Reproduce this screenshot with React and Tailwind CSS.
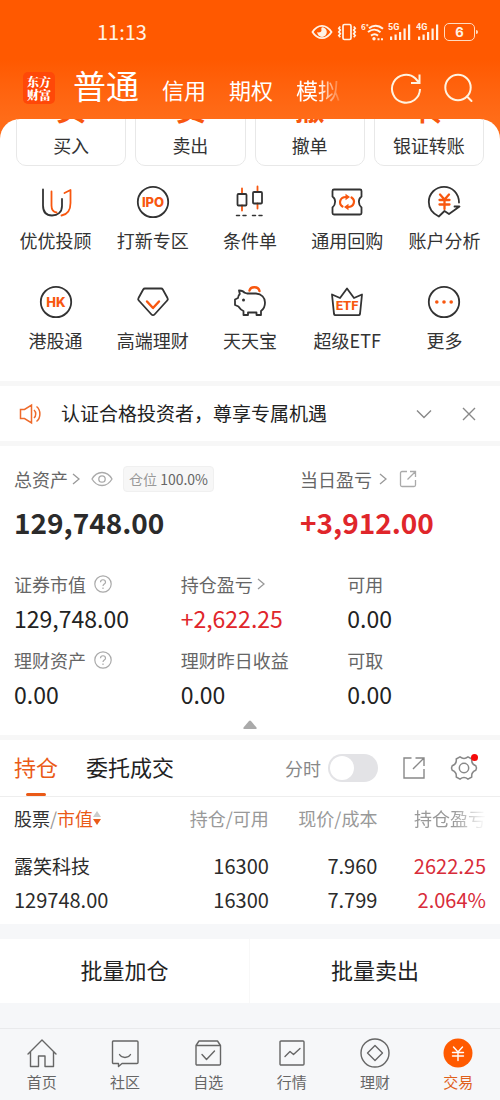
import { useState } from "react";

const accounts = ["信用", "期权"];

const actions = [
  { glyph: "买", label: "买入" },
  { glyph: "卖", label: "卖出" },
  { glyph: "撤", label: "撤单" },
  { glyph: "转", label: "银证转账" },
];

const StatusIcons = () => (
  <div className="flex items-center gap-1 text-[#fff3e6]">
    <svg className="h-5 w-[22px]" viewBox="0 0 22 20" fill="none" stroke="currentColor" strokeWidth="1.8">
      <path d="M1.5 10C4 6 7.300 3.800 11 3.800S18 6 20.500 10C18 14 14.700 16.200 11 16.200S4 14 1.500 10z" />
      <path d="M11 5.300a4.800 4.800 0 1 1-4.800 4.800c1.300.9 4.300.2 4.300-1.600 0-1-.6-2.400.5-3.200z" fill="currentColor" stroke="none" />
    </svg>
    <svg className="h-5 w-5" viewBox="0 0 20 20" fill="none" stroke="currentColor" strokeWidth="1.7">
      <rect x="6" y="2.500" width="8" height="15" rx="1.500" />
      <path d="M3.300 4.500L1.800 6.300l1.500 1.800-1.500 1.800 1.500 1.800-1.500 1.800 1.500 1.800M16.700 4.500l1.500 1.800-1.500 1.800 1.500 1.800-1.500 1.800 1.500 1.800-1.500 1.800" />
    </svg>
    <svg className="h-5 w-[23px]" viewBox="0 0 23 20" fill="none" stroke="currentColor" strokeWidth="2">
      <text x="0" y="7.500" fontSize="8" fontWeight="700" fill="currentColor" stroke="none">6⁺</text>
      <path d="M8 6.200c4-3.200 9.500-3.200 14 .5M7 10c4-3.200 9-3 12.500.3M10 13.600c2.200-1.600 5-1.600 7 0" />
      <circle cx="13" cy="16.800" r="1.700" fill="currentColor" stroke="none" />
      <path d="M16.500 17.300h2M20 17.300h2" />
    </svg>
    <Signal type="5G" />
    <Signal type="4G" />
    <div className="flex items-center">
      <span className="flex h-[18px] w-[31px] items-center justify-center rounded-[5px] border border-[#ffdcc0] font-[Inter,sans-serif] text-[13px] leading-4 font-bold">
        6
      </span>
      <span className="ml-px h-1 w-[2px] rounded-r bg-[#ffdcc0]" />
    </div>
  </div>
);

const Signal = ({ type }) => (
  <svg className="h-5 w-6 font-[Roboto,sans-serif]" viewBox="0 0 24 20" fill="currentColor">
    <text x="0" y="8" fontSize="9" fontWeight="700">{type}</text>
    <path d="M2 14.500h2.200v3.500H2zM6.500 12.500h2.200V18H6.500zM11 10h2.200v8H11zM15.500 6.500h2.200V18h-2.200zM20 2.500h2.200V18H20z" />
  </svg>
);

const Icon = ({ children }) => (
  <svg className="size-9" viewBox="0 0 36 36" fill="none" stroke="#333" strokeWidth="1.800" strokeLinecap="round" strokeLinejoin="round">
    {children}
  </svg>
);

const IconText = ({ children, className = "font-[Inter,sans-serif]", y = "22.700" }) => (
  <text className={className} x="18" y={y} textAnchor="middle" fontSize="13" fontWeight="800" fill="#f8570f" stroke="none">
    {children}
  </text>
);

const shortcuts = [
  {
    label: "优优投顾",
    icon: (
      <Icon>
        <path d="M5 5.500v16c0 6.500 3.500 10 9 10s10-3 10-9.500v-7" />
        <path d="M13.500 7.500v14c0 4 2 6.500 5 7M26.500 9l6-3V19c0 8-3 11.500-9 12.500" stroke="#f8570f" />
      </Icon>
    ),
  },
  {
    label: "打新专区",
    icon: (
      <Icon>
        <circle cx="18" cy="18" r="15.200" />
        <IconText>IPO</IconText>
      </Icon>
    ),
  },
  {
    label: "条件单",
    icon: (
      <Icon>
        <path d="M10 4.500V10M10 21.500v5M25.500 2.500V8M25.500 19.500v5" stroke="#f8570f" />
        <rect x="5.500" y="10" width="9" height="11.500" rx="1" />
        <rect x="21" y="8" width="9" height="11.500" rx="1" />
        <path d="M4.500 31.500h3M11 31.500h3M20.500 31.500h3M27 31.500h3" strokeWidth="1.500" />
      </Icon>
    ),
  },
  {
    label: "通用回购",
    icon: (
      <Icon>
        <path d="M5 5.500h26a1.500 1.500 0 0 1 1.500 1.500v5.500c-3.500 2.500-3.500 8 0 11V29a1.500 1.500 0 0 1-1.500 1.500H5A1.500 1.500 0 0 1 3.500 29v-5.500c3.500-3 3.500-8.500 0-11V7A1.500 1.500 0 0 1 5 5.500z" />
        <path d="M13.500 22.500c-4.500-3-2.500-9.500 3.500-9.500M22.500 13.500c4.500 3 2.500 9.500-3.500 9.500" stroke="#f8570f" strokeWidth="2.200" />
        <path d="M16.500 9.800v6.400l4.500-3.200zM19.500 19.800v6.400L15 23z" fill="#f8570f" stroke="none" />
      </Icon>
    ),
  },
  {
    label: "账户分析",
    icon: (
      <Icon>
        <path d="M33 18.500C33 9.500 26.500 2.800 18 2.800S2.800 9.600 2.800 18c0 6.500 4 11.500 10 14.500l5.700-5.500 4.500 3L33.500 22.500h-5" />
        <path d="M14 10.500l4.500 5 4.500-5M18.500 16v9M13.500 16h10M13.500 20.500h10" stroke="#f8570f" strokeWidth="2.300" />
      </Icon>
    ),
  },
  {
    label: "港股通",
    icon: (
      <Icon>
        <circle cx="18" cy="18" r="15.200" />
        <IconText>HK</IconText>
      </Icon>
    ),
  },
  {
    label: "高端理财",
    icon: (
      <Icon>
        <path d="M10 4.500h16a2 2 0 0 1 1.800 1L32.500 14a2 2 0 0 1-.3 2.500L19.500 30.500a2 2 0 0 1-3 0L3.800 16.500a2 2 0 0 1-.3-2.500l4.700-8.500a2 2 0 0 1 1.800-1z" />
        <path d="M12 17.500l6 6.500 6-6.500" stroke="#f8570f" strokeWidth="2.400" />
      </Icon>
    ),
  },
  {
    label: "天天宝",
    icon: (
      <Icon>
        <path d="M17.500 6.500c1-4.500 9-4.500 10 .5" stroke="#f8570f" strokeWidth="2.400" />
        <path d="M15 9.500h9c5.500.5 9 4 9 9 0 4.500-2.500 7.500-4 8.500v4h-4.500v-2.500H16V31h-4.500v-4C8.500 26 7.500 24 6.500 22.500L3 21v-5.500l3-1.500c0-2 .8-3 1.800-4L7 6.500c2.500 0 4.500.5 5.500 2.200z" />
        <circle cx="11.500" cy="16" r="1.500" fill="#333" stroke="none" />
      </Icon>
    ),
  },
  {
    label: "超级ETF",
    icon: (
      <Icon>
        <path d="M3 10.500l8 3.500 7-9.500 7 9.500 8-3.500-2 19.500a1.500 1.500 0 0 1-1.500 1.200h-23A1.500 1.500 0 0 1 5 30z" />
        <IconText className="font-[Roboto,sans-serif]" y="26">ETF</IconText>
      </Icon>
    ),
  },
  {
    label: "更多",
    icon: (
      <Icon>
        <circle cx="18" cy="18" r="15.200" />
        <g fill="#f8570f" stroke="none">
          <circle cx="10.800" cy="18" r="1.800" />
          <circle cx="18" cy="18" r="1.800" />
          <circle cx="25.200" cy="18" r="1.800" />
        </g>
      </Icon>
    ),
  },
];

const NavIcon = ({ children }) => (
  <svg className="size-8" viewBox="0 0 32 32" fill="none" stroke="#666" strokeWidth="1.400" strokeLinejoin="round" strokeLinecap="round">
    {children}
  </svg>
);

const navItems = [
  {
    label: "首页",
    icon: (
      <NavIcon>
        <path d="M2 17L16 3l14 14M4.500 15v14.500h8v-10.500h6.500v10.500h8.500V15" />
      </NavIcon>
    ),
  },
  {
    label: "社区",
    icon: (
      <NavIcon>
        <path d="M4 4h24a1 1 0 0 1 1 1v20.500a1 1 0 0 1-1 1H13L9.500 29.500v-3H4.500a1 1 0 0 1-1-1V5a1 1 0 0 1 1-1z" />
        <path d="M10.500 17.500c2.500 4 8.500 4 11 0" />
      </NavIcon>
    ),
  },
  {
    label: "自选",
    icon: (
      <NavIcon>
        <path d="M4 8.500h24.500V27a1 1 0 0 1-1 1H5a1 1 0 0 1-1-1zM4 8.500L7 4h18.500l3 4.500M10 17.500l4.500 5 8-8.500" />
      </NavIcon>
    ),
  },
  {
    label: "行情",
    icon: (
      <NavIcon>
        <rect x="4" y="4" width="24" height="24" rx="1" />
        <path d="M9 19.500l5-5 3.500 3 6.500-6" />
      </NavIcon>
    ),
  },
  {
    label: "理财",
    icon: (
      <NavIcon>
        <circle cx="16" cy="16" r="14" />
        <path d="M16 8.500l7.500 7.500-7.500 7.500L8.500 16z" />
      </NavIcon>
    ),
  },
  {
    label: "交易",
    active: true,
    icon: (
      <NavIcon>
        <circle cx="16" cy="16" r="14.500" fill="#ff5a00" stroke="none" />
        <path d="M11.500 10L16 15l4.500-5M16 15v8.500M10.500 15.500h11M10.500 19h11" stroke="#fff" strokeWidth="1.400" />
      </NavIcon>
    ),
  },
];

const Chevron = () => (
  <svg className="h-3 w-2" viewBox="0 0 8 12" fill="none" stroke="#999" strokeWidth="1.300">
    <path d="M1 1l6 5-6 5" />
  </svg>
);

const Help = () => (
  <svg className="ml-2 size-[18px]" viewBox="0 0 18 18" fill="none" stroke="#aaa" strokeWidth="1.200">
    <circle cx="9" cy="9" r="8.200" />
    <path d="M6.500 7.200c0-3.300 5-3.300 5 0 0 1.800-2.500 1.900-2.500 3.800M9 12.500V14" />
  </svg>
);

const stats = [
  { label: "证券市值", value: "129,748.00", help: true },
  { label: "持仓盈亏", value: "+2,622.25", link: true, up: true },
  { label: "可用", value: "0.00" },
  { label: "理财资产", value: "0.00", help: true },
  { label: "理财昨日收益", value: "0.00" },
  { label: "可取", value: "0.00" },
];

const Header = () => (
  <header className="bg-linear-to-b from-[#ff5900] from-50% to-[#ff6c18] text-white">
    <div className="flex h-16 items-center justify-between pr-[22px] pl-[97px]">
      <span className="text-xl leading-6 text-[#fff3e6]">11:13</span>
      <StatusIcons />
    </div>
    <div className="flex h-[55px] items-center pr-[26px] pb-2 pl-[23px]">
      <div className="flex size-8 flex-col items-center justify-center rounded-[5px] bg-[#ff4808] font-['Noto_Serif_CJK_SC','Noto_Sans_CJK_SC',serif] text-xs leading-[13px] font-black">
        <span>东方</span>
        <span>财富</span>
      </div>
      <nav className="ml-[18px] flex flex-1 items-baseline gap-[23px] text-[22px] leading-[47px]">
        <button type="button" className="text-[33px]">普通</button>
        {accounts.map((name) => (
          <button key={name} type="button">{name}</button>
        ))}
        <button type="button" className="[mask-image:linear-gradient(to_right,black_50%,transparent_110%)]">模拟</button>
      </nav>
      <button type="button" aria-label="刷新">
        <svg className="size-8" viewBox="0 0 32 32" fill="none" stroke="#fff3e0" strokeWidth="2">
          <path d="M30 17A14 14 0 1 1 25.500 6.500L28.500 10M29.500 2.500v8.500H21" />
        </svg>
      </button>
      <button type="button" aria-label="搜索" className="ml-5">
        <svg className="size-8" viewBox="0 0 32 32" fill="none" stroke="#fff3e0" strokeWidth="2" strokeLinecap="round">
          <circle cx="16" cy="15.500" r="12.700" />
          <path d="M25 24.500l4.500 4.500" />
        </svg>
      </button>
    </div>
  </header>
);

const Shortcuts = () => (
  <div className="bg-[#ff6c18]">
    <section className="overflow-hidden rounded-t-[20px] bg-white pb-[27px]">
      <div className="-mt-7 grid grid-cols-4 gap-[9px] px-4">
        {actions.map((a) => (
          <button key={a.label} type="button" className="flex flex-col items-center rounded-[10px] border border-[#e8e8e8] pb-2">
            <span className="text-[30px] leading-[30px] font-bold text-[#f8570f]">{a.glyph}</span>
            <span className="mt-[11px] text-lg leading-6 text-[#333]">{a.label}</span>
          </button>
        ))}
      </div>
      <div className="mt-[18px] grid grid-cols-5 gap-y-[30px] px-[7px]">
        {shortcuts.map((s) => (
          <button key={s.label} type="button" className="flex flex-col items-center gap-[6px]">
            {s.icon}
            <span className="text-lg leading-7 text-[#333]">{s.label}</span>
          </button>
        ))}
      </div>
    </section>
  </div>
);

const Notice = () => (
  <section className="flex h-[55px] items-center bg-white pr-[23px] pl-[19px]">
    <svg className="h-6 w-[22px]" viewBox="0 0 22 24" fill="none" stroke="#ee6a2a" strokeWidth="1.500">
      <path d="M1.500 7.500h4L12.500 3v18l-7-4.500h-4zM15 8c2.300 2 2.300 6 0 8M17.500 4.500c4.500 3.500 4.500 11.500 0 15" />
    </svg>
    <p className="ml-5 flex-1 pb-px text-[19px] leading-7 text-[#222]">认证合格投资者，尊享专属机遇</p>
    <button type="button" aria-label="展开">
      <svg className="h-4 w-4" viewBox="0 0 16 16" fill="none" stroke="#888" strokeWidth="1.400">
        <path d="M1 4.500l7 7 7-7" />
      </svg>
    </button>
    <button type="button" aria-label="关闭" className="ml-[29px]">
      <svg className="h-4 w-4" viewBox="0 0 16 16" fill="none" stroke="#888" strokeWidth="1.400">
        <path d="M2 2l12 12M14 2L2 14" />
      </svg>
    </button>
  </section>
);

const Assets = () => (
  <section className="bg-white pt-5 pb-[5px]">
    <div className="grid grid-cols-[3fr_2fr]">
      <div className="pl-[14px]">
        <div className="flex h-[26px] items-center text-lg leading-[26px] text-[#666]">
          <span>总资产</span>
          <span className="ml-1"><Chevron /></span>
          <svg className="ml-[11px] h-4 w-[22px]" viewBox="0 0 22 16" fill="none" stroke="#aaa" strokeWidth="1.300">
            <path d="M1 8c2.500-4.300 6-6.500 10-6.500S18.500 3.700 21 8c-2.500 4.300-6 6.500-10 6.500S3.500 12.300 1 8z" />
            <circle cx="11" cy="8" r="3.200" />
          </svg>
          <span className="ml-[10px] rounded border border-[#f0f0f0] bg-[#f7f7f7] px-[5px] text-sm leading-6 text-[#666]">
            <span className="text-[#999]">仓位</span> 100.0%
          </span>
        </div>
        <p className="mt-[10px] text-[28px] leading-10 font-bold text-[#2b2b2b]">129,748.00</p>
      </div>
      <div>
        <div className="flex h-[26px] items-center text-lg leading-[26px] text-[#666]">
          <span>当日盈亏</span>
          <span className="ml-[7px]"><Chevron /></span>
          <svg className="ml-3 size-[18px]" viewBox="0 0 18 18" fill="none" stroke="#aaa" strokeWidth="1.300">
            <path d="M8 1.500H3A1.500 1.500 0 0 0 1.500 3v12A1.500 1.500 0 0 0 3 16.500h12a1.500 1.500 0 0 0 1.500-1.500v-5M11 1.500h5.500V7M16.500 1.500L8.500 9.500" />
          </svg>
        </div>
        <p className="mt-[10px] text-[28px] leading-10 font-bold text-[#e0262b]">+3,912.00</p>
      </div>
    </div>
    <dl className="mt-7 grid grid-cols-3 gap-y-[10px]">
      {stats.map((s) => (
        <div key={s.label} className="pl-[14px]">
          <dt className="flex h-7 items-center text-lg leading-7 text-[#666]">
            {s.label}
            {s.help && <Help />}
            {s.link && <span className="ml-1"><Chevron /></span>}
          </dt>
          <dd className={s.up ? "mt-[2px] text-[23px] leading-9 text-[#e0262b]" : "mt-[2px] text-[23px] leading-9 text-[#222]"}>{s.value}</dd>
        </div>
      ))}
    </dl>
    <button type="button" aria-label="收起" className="mx-auto mt-2 block">
      <svg className="h-[10px] w-[14px]" viewBox="0 0 14 10" fill="#aaa">
        <path d="M6 1Q7 0 8 1l5.500 6.500Q14 9 12.500 9h-11Q0 9 .5 7.500z" />
      </svg>
    </button>
  </section>
);

const Positions = () => {
  const [timeline, setTimeline] = useState(false);

  return (
    <section className="bg-white pb-[7px]">
      <div className="flex h-[57px] items-center border-b border-[#eee] pr-[22px] pl-[14px] text-[22px]">
        <button type="button" className="relative h-14 pb-1 text-[#ea5a17]">
          持仓
          <span className="absolute bottom-0 left-3 h-[3px] w-5 rounded-full bg-[#ea5a17]" />
        </button>
        <button type="button" className="ml-7 h-14 pb-1 text-[#222]">委托成交</button>
        <label className="ml-auto flex items-center gap-[7px] text-lg text-[#888]">
          分时
          <input
            type="checkbox"
            checked={timeline}
            onChange={(e) => setTimeline(e.target.checked)}
            className="h-7 w-[50px] appearance-none rounded-full bg-[#e3e3e6] p-[2px] before:block before:size-6 before:rounded-full before:bg-white checked:bg-[#ff5a00] checked:before:ml-[22px]"
          />
        </label>
        <button type="button" aria-label="分享" className="ml-6">
          <svg className="size-6" viewBox="0 0 24 24" fill="none" stroke="#888" strokeWidth="1.400">
            <path d="M9.500 2H2v20h20v-9M13.500 2H22v8M22 2L11 13" />
          </svg>
        </button>
        <button type="button" aria-label="设置" className="relative ml-6">
          <svg className="size-7" viewBox="0 0 28 28" fill="none" stroke="#888" strokeWidth="1.500" strokeLinejoin="round">
            <path d="M10 2.800Q14 6 18 2.800L21.800 5Q21 10 25.800 11.800L26.500 14l-.7 2.200Q21 18 21.800 23L18 25.200q-4-3.200-8 0L6.200 23Q7 18 2.200 16.200L1.500 14l.7-2.200Q7 10 6.200 5z" />
            <circle cx="14" cy="14" r="4.700" />
          </svg>
          <span className="absolute top-0 right-0 size-[7px] rounded-full bg-[#f50a0a]" />
        </button>
      </div>
      <div className="px-[14px]">
        <table className="w-full table-fixed text-right text-xl leading-[34px] whitespace-nowrap text-[#2b2b2b]">
          <thead className="text-lg leading-[42px] text-[#999]">
            <tr>
              <th className="w-[31%] text-left font-normal">
                <button type="button" className="flex items-center">
                  <span className="text-[#333]">股票</span>/<span className="text-[#ea5a17]">市值</span>
                  <svg className="h-4 w-2" viewBox="0 0 8 16">
                    <path d="M0 7l4-6 4 6z" fill="#ccc" />
                    <path d="M0 9l4 6 4-6z" fill="#ea5a17" />
                  </svg>
                </button>
              </th>
              <th className="w-[23%] font-normal">持仓/可用</th>
              <th className="w-[23%] font-normal">现价/成本</th>
              <th className="w-[23%] font-normal [mask-image:linear-gradient(to_right,black_70%,transparent)]">持仓盈亏</th>
            </tr>
          </thead>
          <tbody>
            <tr>
              <td className="pt-[10px] text-left text-[19px]">露笑科技</td>
              <td className="pt-[10px]">16300</td>
              <td className="pt-[10px]">7.960</td>
              <td className="pt-[10px] text-[#d82c3a]">2622.25</td>
            </tr>
            <tr>
              <td className="text-left">129748.00</td>
              <td>16300</td>
              <td>7.799</td>
              <td className="text-[#d82c3a]">2.064%</td>
            </tr>
          </tbody>
        </table>
      </div>
    </section>
  );
};

const App = () => (
  <div className="flex min-h-screen flex-col bg-[#f6f7f9] font-['Noto_Sans_CJK_SC',sans-serif]">
    <Header />
    <Shortcuts />
    <main className="flex flex-col gap-[5px] bg-[#f7f7f7] pt-[5px]">
      <Notice />
      <Assets />
      <Positions />
    </main>
    <div className="mt-[15px] grid grid-cols-2 divide-x divide-[#f8f8f8] bg-white text-[22px] leading-[60px] text-[#222]">
      <button type="button" className="pb-1">批量加仓</button>
      <button type="button" className="pb-1">批量卖出</button>
    </div>
    <nav className="mt-auto grid grid-cols-6 border-t border-[#e9eaec] pt-2 pb-[6px]">
      {navItems.map((item) => (
        <a key={item.label} href="#" className="flex flex-col items-center gap-px">
          {item.icon}
          <span className={item.active ? "text-[15px] leading-6 text-[#e0601c]" : "text-[15px] leading-6 text-[#666]"}>{item.label}</span>
        </a>
      ))}
    </nav>
  </div>
);

export default App;
